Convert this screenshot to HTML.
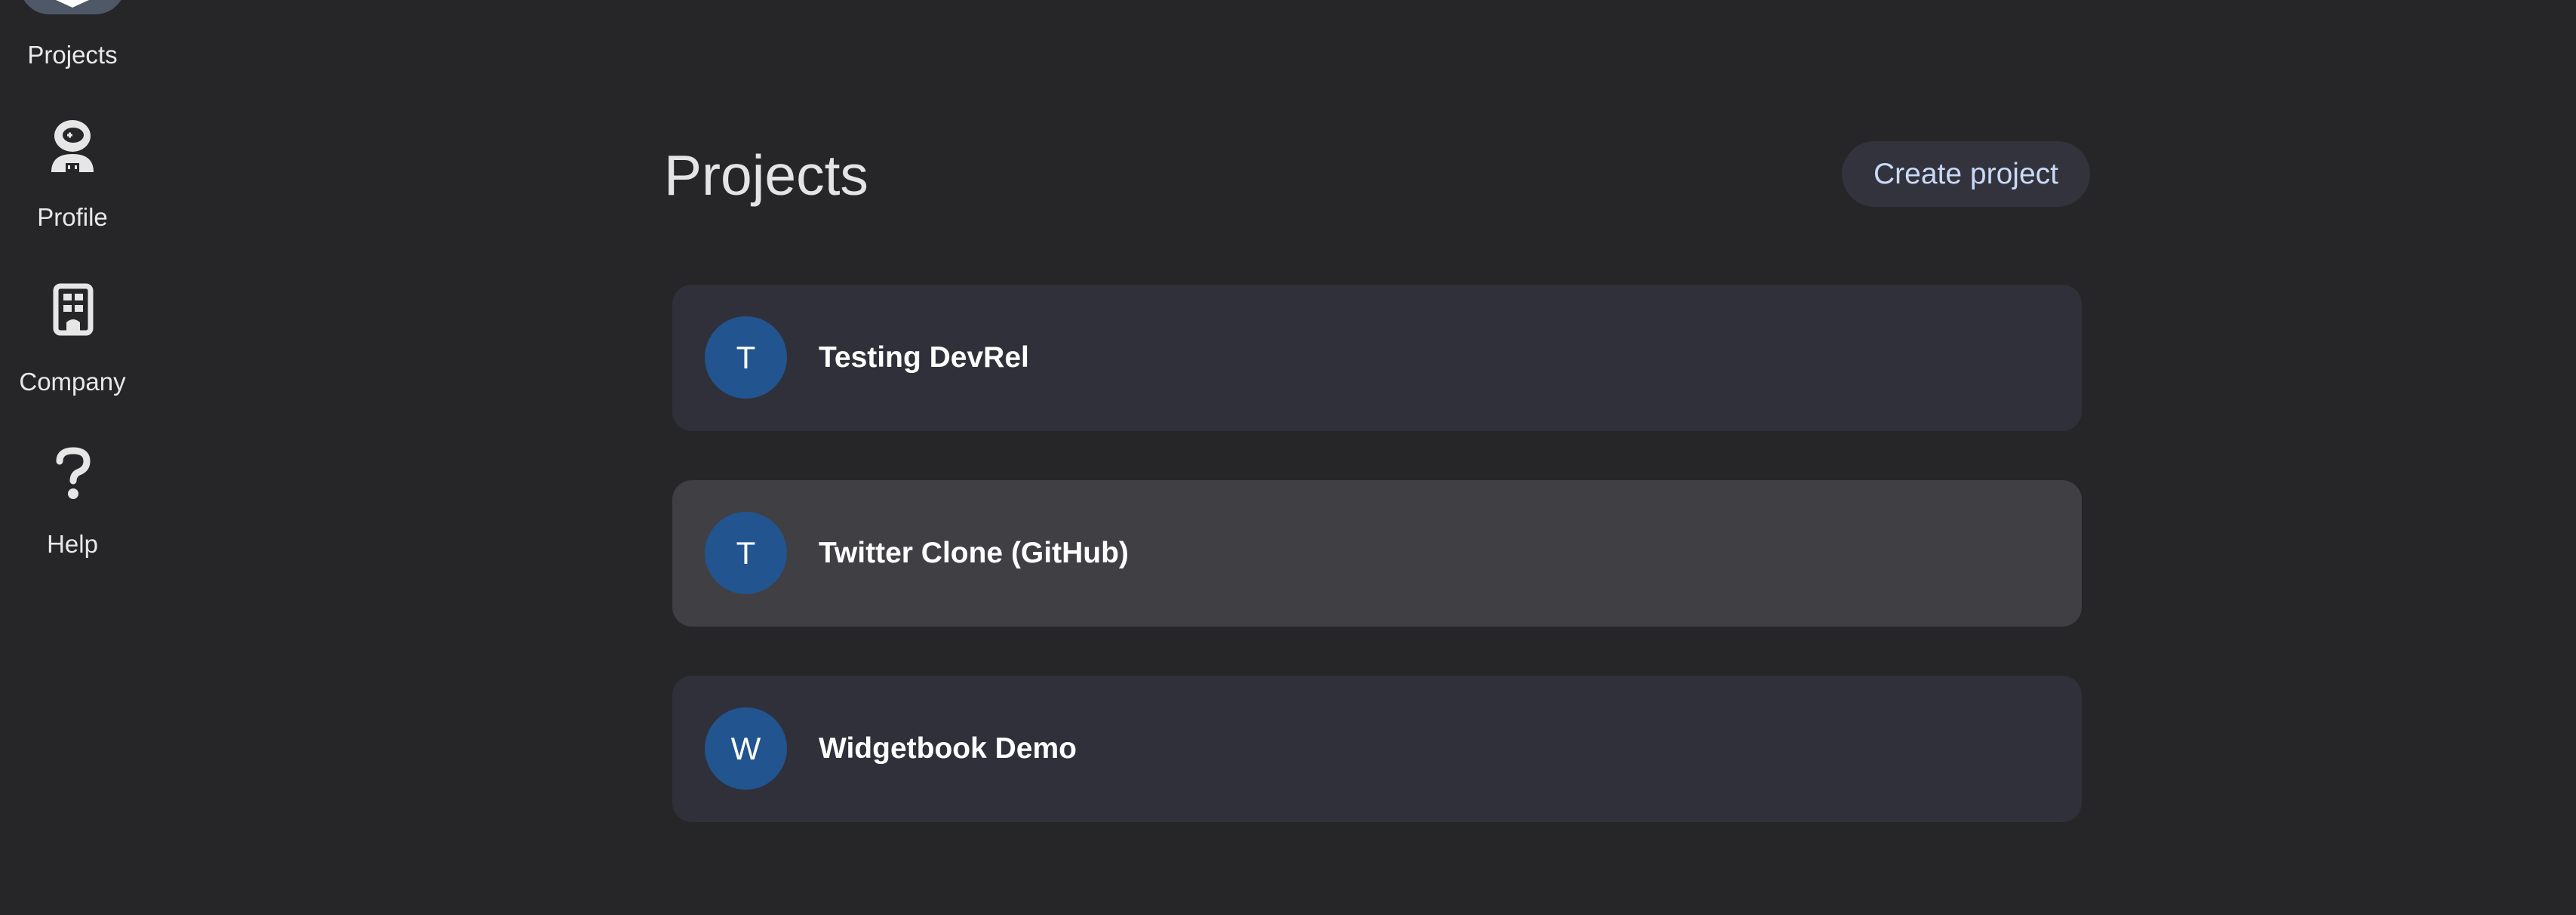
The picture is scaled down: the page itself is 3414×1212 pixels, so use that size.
<!DOCTYPE html>
<html><head><meta charset="utf-8"><style>
html,body{margin:0;padding:0;}
body{width:3414px;height:1212px;background:#262628;position:relative;overflow:hidden;font-family:"Liberation Sans","DejaVu Sans",sans-serif;color:#eee;}
.pill{position:absolute;left:26px;top:-60px;width:140px;height:79px;border-radius:40px;background:#4e5867;}
.lbl{position:absolute;left:0;width:192px;text-align:center;font-size:33px;color:#e8e8e8;line-height:40px;}
.ico{position:absolute;}
h1{position:absolute;left:880px;top:187px;margin:0;font-weight:normal;font-size:75px;line-height:90px;color:#e4e4e4;}
.btn{position:absolute;left:2441px;top:187px;width:329px;height:87px;border-radius:44px;background:#32333c;color:#c9d9f7;font-size:39px;line-height:87px;text-align:center;}
.card{position:absolute;left:891px;width:1868px;height:194px;border-radius:26px;background:#30303a;}
.card.h{background:#3f3f44;}
.av{position:absolute;left:43px;top:42px;width:109px;height:109px;border-radius:50%;background:#22548f;color:#fff;font-size:42px;line-height:109px;text-align:center;}
.nm{position:absolute;left:194px;top:0;line-height:194px;font-size:39px;font-weight:bold;color:#fff;}
</style></head><body>
<div class="pill"></div>
<svg class="ico" style="left:70px;top:0" width="52" height="20"><path d="M4 0 L26 10 L48 0 Z" fill="#fff"/></svg>
<div class="lbl" style="top:53px">Projects</div>

<svg class="ico" style="left:64px;top:158px" width="64" height="70" viewBox="0 0 64 70">
<ellipse cx="32" cy="22" rx="24" ry="21" fill="#e6e6e6"/>
<ellipse cx="33" cy="21" rx="14" ry="10" fill="#262628"/>
<path d="M25 21h7M28.5 17.5v7" stroke="#e6e6e6" stroke-width="3"/>
<path d="M4 70 Q4 46 32 46 Q60 46 60 70 Z" fill="#e6e6e6"/>
<rect x="23" y="58" width="18" height="12" fill="#262628"/>
<rect x="26" y="61" width="3" height="5" fill="#e6e6e6"/><rect x="35" y="61" width="3" height="5" fill="#e6e6e6"/>
</svg>
<div class="lbl" style="top:268px">Profile</div>

<svg class="ico" style="left:70px;top:375px" width="54" height="70" viewBox="0 0 54 70">
<rect x="4" y="4" width="46" height="62" rx="6" fill="none" stroke="#e6e6e6" stroke-width="7"/>
<rect x="14" y="14" width="11" height="9" fill="#e6e6e6"/><rect x="29" y="14" width="11" height="9" fill="#e6e6e6"/>
<rect x="14" y="29" width="11" height="9" fill="#e6e6e6"/><rect x="29" y="29" width="11" height="9" fill="#e6e6e6"/>
<path d="M18 66 V52 Q27 44 36 52 V66 Z" fill="#e6e6e6"/>
</svg>
<div class="lbl" style="top:486px">Company</div>

<svg class="ico" style="left:72px;top:592px" width="50" height="70" viewBox="0 0 50 70">
<path d="M7 19 Q7 5 25 5 Q43 5 43 19 Q43 29 33 33 Q25 36 25 45" fill="none" stroke="#e6e6e6" stroke-width="9" stroke-linecap="round"/>
<circle cx="25" cy="62" r="7" fill="#e6e6e6"/>
</svg>
<div class="lbl" style="top:701px">Help</div>

<h1>Projects</h1>
<div class="btn">Create project</div>

<div class="card" style="top:377px"><div class="av">T</div><div class="nm">Testing DevRel</div></div>
<div class="card h" style="top:636px"><div class="av">T</div><div class="nm">Twitter Clone (GitHub)</div></div>
<div class="card" style="top:895px"><div class="av">W</div><div class="nm">Widgetbook Demo</div></div>
</body></html>
